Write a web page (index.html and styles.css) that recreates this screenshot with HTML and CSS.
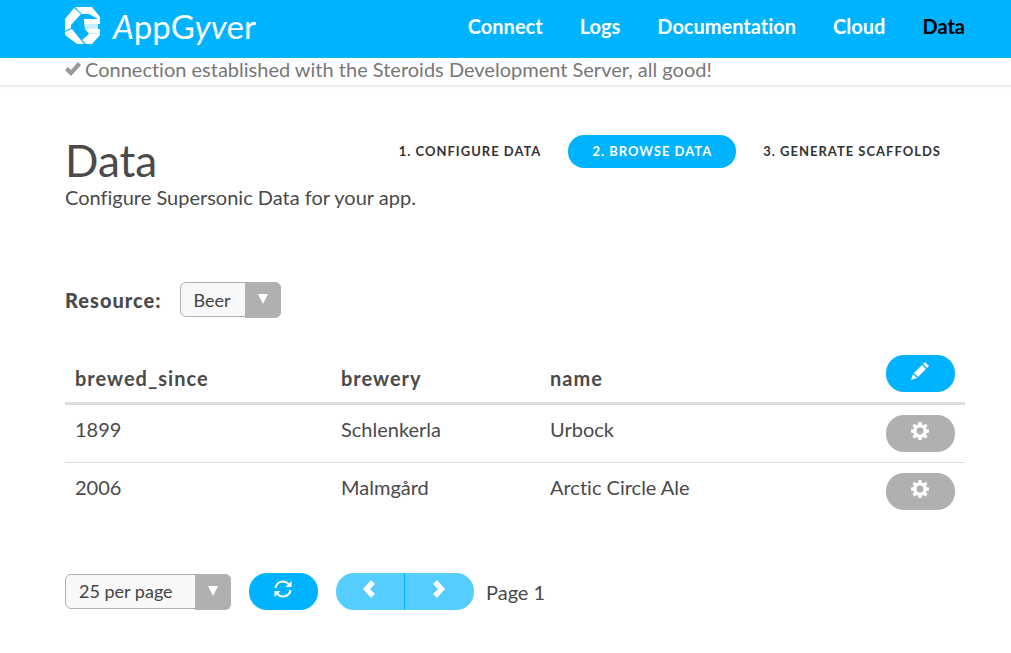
FILE: index.html
```html
<!DOCTYPE html>
<html lang="en">
<head>
<meta charset="utf-8">
<title>AppGyver - Data</title>
<link rel="stylesheet" href="styles.css">
</head>
<body>
<svg class="sprite" aria-hidden="true">
  <symbol id="cog" viewBox="0 0 18 18">
    <path fill-rule="evenodd" d="M7.500 0h3l.5 2.600 1.300.6 2.200-1.500 2 2-1.500 2.200.6 1.400 2.400.3v2.900l-2.500.5-.5 1.300 1.500 2.200-2 2-2.200-1.500-1.300.6-.5 2.400h-3l-.5-2.400-1.300-.6-2.200 1.500-2-2L3 12.300 2.500 11 0 10.500V7.600l2.400-.3L3 5.900 1.500 3.700l2-2 2.200 1.500L7 2.600zM9 5.600a3.400 3.400 0 1 0 0 6.800 3.400 3.400 0 0 0 0-6.800z"/>
  </symbol>
</svg>
<header class="topbar">
  <a class="brand" href="#" aria-label="AppGyver">
    <svg class="brand-mark" viewBox="0 0 36 38" aria-hidden="true">
      <path fill="#fff" d="M9 1l7 6L6 18v3l-6 3V12z"/>
      <path fill="#fff" d="M10 0h17l8 10v3L24 7h-7z"/>
      <path fill="#fff" d="M0 25l7-3 12 15h-7L0 28z"/>
      <path fill="#fff" d="M17 33l7-6 11-1v2l-8 9h-6z"/>
      <path fill="#fff" d="M19 12h15l1 2v3H19zM20 22h15v4l-11 1z"/>
      <path fill="#c9efff" d="M19 17h14v5H20z"/>
    </svg>
    <span class="brand-name"><i>A</i>ppG<i>yv</i>er</span>
  </a>
  <nav class="nav">
    <a href="#">Connect</a>
    <a href="#">Logs</a>
    <a href="#">Documentation</a>
    <a href="#">Cloud</a>
    <a class="current" href="#">Data</a>
  </nav>
</header>
<div class="status">
  <svg class="check" viewBox="0 0 16 14" aria-hidden="true"><path d="M0 8l3-3 3 3 7-8 3 3L6 14z"/></svg>
  <span>Connection established with the Steroids Development Server, all good!</span>
</div>
<main class="page">
  <div class="intro">
    <h1>Data</h1>
    <nav class="tabs">
      <a href="#">1. Configure data</a>
      <a class="active" href="#">2. Browse data</a>
      <a href="#">3. Generate scaffolds</a>
    </nav>
  </div>
  <p class="lead">Configure Supersonic Data for your app.</p>
  <div class="resource">
    <label for="resource">Resource:</label>
    <span class="picker picker-small">
      <select id="resource"><option>Beer</option></select>
      <svg viewBox="0 0 36 36" aria-hidden="true"><path d="M13 12h10l-5 10z"/></svg>
    </span>
  </div>
  <table class="records">
    <thead>
      <tr>
        <th class="col-since">brewed_since</th>
        <th class="col-brewery">brewery</th>
        <th>name</th>
        <th class="col-action"><button class="pill primary" aria-label="Edit"><svg viewBox="0 0 18 18"><path d="M0 18l2-6 4 4zM3 11l8-8 4 4-8 8zM12 2l2-2 4 4-2 2z"/></svg></button></th>
      </tr>
    </thead>
    <tbody>
      <tr>
        <td>1899</td><td>Schlenkerla</td><td>Urbock</td>
        <td class="col-action"><button class="pill" aria-label="Settings"><svg viewBox="0 0 18 18"><use href="#cog"/></svg></button></td>
      </tr>
      <tr>
        <td>2006</td><td>Malmgård</td><td>Arctic Circle Ale</td>
        <td class="col-action"><button class="pill" aria-label="Settings"><svg viewBox="0 0 18 18"><use href="#cog"/></svg></button></td>
      </tr>
    </tbody>
  </table>
  <div class="pager">
    <span class="picker picker-wide">
      <select aria-label="Rows per page"><option>25 per page</option></select>
      <svg viewBox="0 0 36 36" aria-hidden="true"><path d="M13 12h10l-5 10z"/></svg>
    </span>
    <button class="pill primary" aria-label="Refresh"><svg viewBox="0 0 18 18"><path class="line" d="M1.500 8a7.500 7.500 0 0 1 13-4M16.500 10a7.500 7.500 0 0 1-13 4"/><path d="M17.500 1v6h-6zM.5 17v-6h6z"/></svg></button>
    <div class="steps">
      <button class="pill" aria-label="Previous page"><svg viewBox="0 0 18 18"><path d="M3 9l8-9 4 4-5 5 5 5-4 4z"/></svg></button>
      <button class="pill" aria-label="Next page"><svg viewBox="0 0 18 18"><path d="M15 9l-8-9-4 4 5 5-5 5 4 4z"/></svg></button>
    </div>
    <span>Page 1</span>
  </div>
</main>
</body>
</html>
```

FILE: styles.css
```css
* { box-sizing: border-box; }
body {
  margin: 0;
  background: #fff;
  color: #4a4a4a;
  font: 20px/24px Lato, "Open Sans", sans-serif;
  font-variant-ligatures: none;
}
a { color: inherit; text-decoration: none; }
.sprite { display: none; }

.topbar {
  display: flex;
  justify-content: space-between;
  align-items: center;
  height: 58px;
  padding: 0 46px 7px 65px;
  background: #00b3ff;
  color: #fff;
}
.brand { display: flex; align-items: center; gap: 12px; }
.brand-mark { width: 36px; height: 38px; }
.brand-name { font-family: Lato, sans-serif; font-size: 33px; line-height: 36px; }
.nav { display: flex; gap: 37px; font-weight: 700; }
.nav .current { color: #000; }

.status {
  display: flex;
  gap: 4px;
  align-items: center;
  height: 28px;
  padding: 0 65px 5px;
  border-bottom: 1px solid #e8e8e8;
  box-shadow: 0 1px 2px #f0f0f0;
  color: #777;
}
.check { width: 16px; height: 14px; fill: #999; }

.page { padding: 49px 46px 32px 65px; }
.intro { display: flex; justify-content: space-between; align-items: flex-start; }
h1 { margin: 0; font-size: 44px; line-height: 50px; font-weight: 400; }
.lead { margin: 0; }
.tabs {
  display: flex;
  gap: 3px;
  font-size: 13px;
  line-height: 33px;
  font-weight: 700;
  letter-spacing: 1px;
  text-transform: uppercase;
}
.tabs a { padding: 0 24px; border-radius: 16px; color: #333; }
.tabs .active { background: #00b3ff; color: #fff; }

.resource { display: flex; align-items: center; gap: 18px; margin-top: 73px; }
.resource label { font-weight: 900; letter-spacing: 1px; }

.picker { position: relative; display: block; height: 36px; }
.picker-small { width: 101px; }
.picker-wide { width: 166px; }
.picker select {
  appearance: none;
  width: 100%;
  height: 35px;
  padding: 0 38px 0 13px;
  border: 1px solid #b0b0b0;
  border-radius: 6px;
  background: #f8f8f8;
  color: #444;
  font: 18px/24px Lato, sans-serif;
}
.picker svg {
  position: absolute;
  top: 0;
  right: 0;
  width: 36px;
  height: 36px;
  border-radius: 0 6px 6px 0;
  background: #b0b0b0;
  fill: #fff;
  pointer-events: none;
}

.records { width: 100%; margin-top: 27px; border-collapse: separate; border-spacing: 0; text-align: left; table-layout: fixed; }
.records th, .records td { padding: 12px 10px; vertical-align: top; }
.records th {
  vertical-align: bottom;
  border-bottom: 3px solid #ddd;
  font-weight: 700;
  letter-spacing: 1px;
}
.records tbody tr:not(:last-child) td { border-bottom: 1px solid #ddd; }
.records .col-since { width: 266px; }
.records .col-brewery { width: 209px; }
.records .col-action { width: 89px; padding: 10px; }

.pill {
  display: flex;
  justify-content: center;
  align-items: center;
  width: 69px;
  height: 37px;
  padding: 0 2px 5px 0;
  border: 0;
  border-radius: 18px;
  background: #b0b0b0;
}
.pill svg { width: 18px; height: 18px; fill: #fff; }
.pill .line { fill: none; stroke: #fff; stroke-width: 2; }
.primary { background: #00b3ff; }

.pager { display: flex; align-items: center; gap: 18px; margin-top: 53px; }
.steps { display: flex; margin-right: -6px; }
.steps .pill { background: #55ceff; }
.steps .pill:first-child { border-right: 1px solid #00b3ff; border-radius: 18px 0 0 18px; }
.steps .pill:last-child { border-radius: 0 18px 18px 0; }
```
